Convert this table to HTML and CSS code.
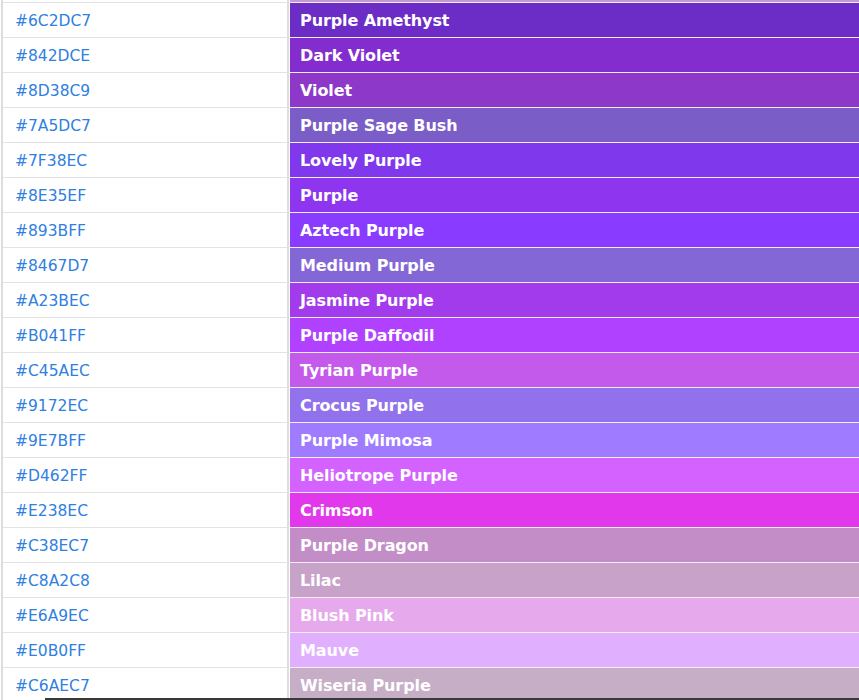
FILE: index.html
```html
<!DOCTYPE html>
<html>
<head>
<meta charset="utf-8">
<link rel="stylesheet" href="styles.css">
</head>
<body>
<div class="wrap">
<table class="colors">
<tbody>
<tr><td class="hex"></td><td class="name" style="background:#C39BD3"></td></tr>
<tr><td class="hex">#6C2DC7</td><td class="name" style="background:#6C2DC7">Purple Amethyst</td></tr>
<tr><td class="hex">#842DCE</td><td class="name" style="background:#842DCE">Dark Violet</td></tr>
<tr><td class="hex">#8D38C9</td><td class="name" style="background:#8D38C9">Violet</td></tr>
<tr><td class="hex">#7A5DC7</td><td class="name" style="background:#7A5DC7">Purple Sage Bush</td></tr>
<tr><td class="hex">#7F38EC</td><td class="name" style="background:#7F38EC">Lovely Purple</td></tr>
<tr><td class="hex">#8E35EF</td><td class="name" style="background:#8E35EF">Purple</td></tr>
<tr><td class="hex">#893BFF</td><td class="name" style="background:#893BFF">Aztech Purple</td></tr>
<tr><td class="hex">#8467D7</td><td class="name" style="background:#8467D7">Medium Purple</td></tr>
<tr><td class="hex">#A23BEC</td><td class="name" style="background:#A23BEC">Jasmine Purple</td></tr>
<tr><td class="hex">#B041FF</td><td class="name" style="background:#B041FF">Purple Daffodil</td></tr>
<tr><td class="hex">#C45AEC</td><td class="name" style="background:#C45AEC">Tyrian Purple</td></tr>
<tr><td class="hex">#9172EC</td><td class="name" style="background:#9172EC">Crocus Purple</td></tr>
<tr><td class="hex">#9E7BFF</td><td class="name" style="background:#9E7BFF">Purple Mimosa</td></tr>
<tr><td class="hex">#D462FF</td><td class="name" style="background:#D462FF">Heliotrope Purple</td></tr>
<tr><td class="hex">#E238EC</td><td class="name" style="background:#E238EC">Crimson</td></tr>
<tr><td class="hex">#C38EC7</td><td class="name" style="background:#C38EC7">Purple Dragon</td></tr>
<tr><td class="hex">#C8A2C8</td><td class="name" style="background:#C8A2C8">Lilac</td></tr>
<tr><td class="hex">#E6A9EC</td><td class="name" style="background:#E6A9EC">Blush Pink</td></tr>
<tr><td class="hex">#E0B0FF</td><td class="name" style="background:#E0B0FF">Mauve</td></tr>
<tr><td class="hex">#C6AEC7</td><td class="name" style="background:#C6AEC7">Wiseria Purple</td></tr>
</tbody>
</table>
</div>
<div class="edge"></div>
</body>
</html>
```

FILE: styles.css
```css
html, body {
  margin: 0;
  padding: 0;
  background: #fff;
  overflow: hidden;
}
.wrap {
  padding-left: 1px;
}
.colors {
  width: 858px;
  margin-top: -33px;
  border-collapse: separate;
  border-spacing: 0;
  border-left: 2px solid #dedede;
  font-family: "DejaVu Sans", Verdana, sans-serif;
}
.colors td {
  height: 32px;
  padding: 2px 0 0 0;
  vertical-align: middle;
  line-height: 20px;
}
.hex {
  width: 272px;
  padding-left: 12px !important;
  border-top: 1px solid #e3e3e3;
  border-right: 2px solid #dedede;
  color: #2f80e0;
  font-size: 15.5px;
}
.name {
  padding-left: 10px !important;
  border-top: 1px solid #f4eef8;
  border-left: 1px solid #fff;
  color: #fff;
  font-weight: bold;
  font-size: 16px;
  letter-spacing: -0.1px;
}
.edge {
  position: fixed;
  left: 45px;
  right: 0;
  bottom: 0;
  height: 2px;
  background: #3a3a3a;
}
```
